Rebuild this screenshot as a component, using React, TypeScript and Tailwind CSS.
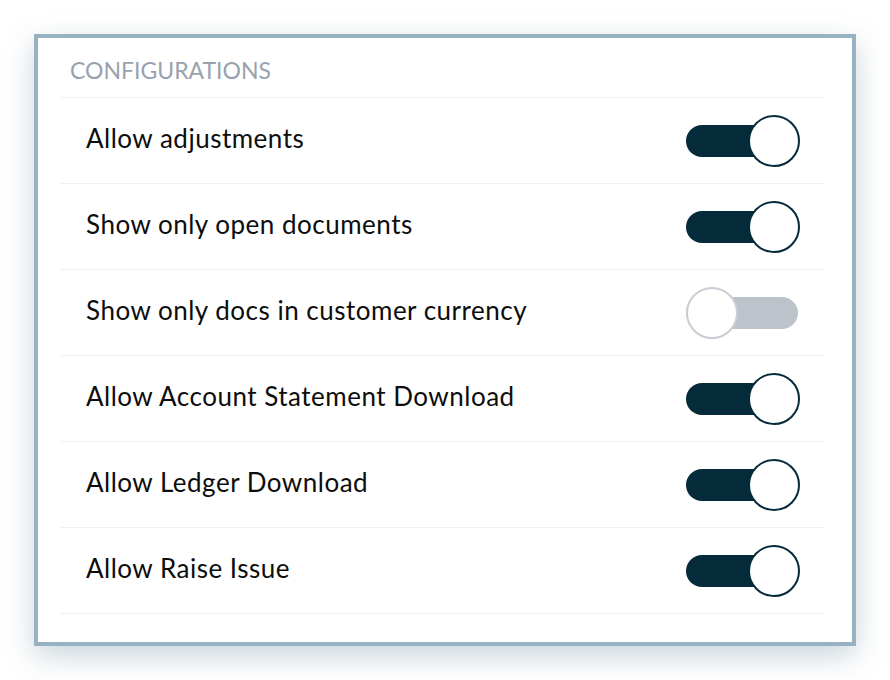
import React from "react";

const settings = [
  { id: 1, label: "Allow adjustments", on: true },
  { id: 2, label: "Show only open documents", on: true },
  { id: 3, label: "Show only docs in customer currency", on: false },
  { id: 4, label: "Allow Account Statement Download", on: true },
  { id: 5, label: "Allow Ledger Download", on: true },
  { id: 6, label: "Allow Raise Issue", on: true },
];

const Toggle = ({ on }: { on: boolean }) => {
  return (
    <div className="relative w-[114px] h-[52px] shrink-0">
      <div
        className={`absolute left-0 top-[10px] w-[112px] h-[32px] rounded-full ${
          on ? "bg-[#052b3a]" : "bg-[#bcc3ca]"
        }`}
      />
      <div
        className={`absolute top-0 w-[52px] h-[52px] rounded-full bg-white border-2 ${
          on ? "right-0 border-[#052b3a]" : "left-0 border-[#c9ced4]"
        }`}
      />
    </div>
  );
};

export default function App() {
  return (
    <div className="w-[890px] h-[680px] bg-white font-['Lato',sans-serif]">
      <div className="pt-[34px] pl-[34px]">
        <div className="w-[822px] h-[612px] bg-white border-4 border-[#97b3c2] shadow-[0_10px_28px_rgba(70,105,125,0.28)] pl-[22px] pr-[28px]">
          <div className="pt-[18px] pb-[13px] pl-[10px] border-b border-[#f0f1f2]">
            <h2 className="text-[23px] leading-[28px] text-[#98a2ae]">
              CONFIGURATIONS
            </h2>
          </div>
          {settings.map((item) => (
            <div
              key={item.id}
              className="flex items-center justify-between h-[86px] border-b border-[#f0f1f2] pl-[26px] pr-[24px]"
            >
              <p className="text-[26px] leading-[30px] pb-[6px] text-[#0d0d0d] tracking-[0.5px]">
                {item.label}
              </p>
              <Toggle on={item.on} />
            </div>
          ))}
        </div>
      </div>
    </div>
  );
}
